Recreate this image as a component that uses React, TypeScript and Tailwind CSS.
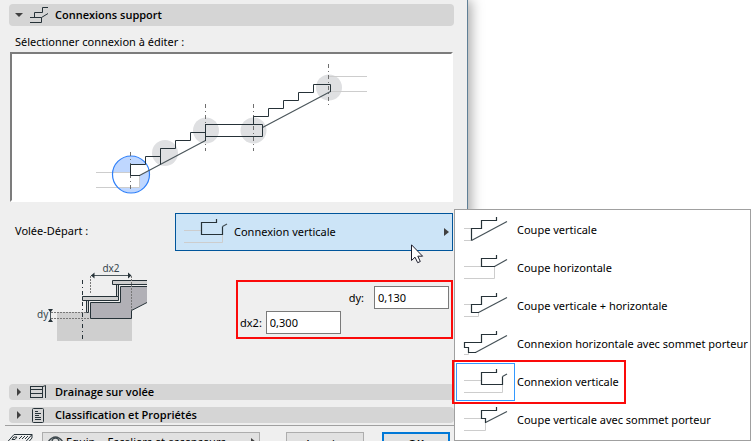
import React from 'react';

const INK = '#263238';
const PALE = '#cdcdcd';

type Connection = {
  label: string;
  stair: string;
  slope: string;
  slab: string;
};

const connections: Connection[] = [
  {
    label: 'Coupe verticale',
    stair: 'M33.5 2V5.5H18.5V13.5H8.5V25.5',
    slope: 'M8.5 25.5L44 6.5',
    slab: 'M1 13.5H8M1 25.5H8',
  },
  {
    label: 'Coupe horizontale',
    stair: 'M33.5 2V5.5H18.5V13.5H32',
    slope: 'M31.5 13.5L44 6.5',
    slab: 'M1 13.5H18M1 25.5H31.5V14',
  },
  {
    label: 'Coupe verticale + horizontale',
    stair: 'M33.5 2V5.5H18.5V13.5H8.5V21.5H16',
    slope: 'M15.5 21.5L44 6.5',
    slab: 'M1 13.5H8M1 25.5H15.5V22',
  },
  {
    label: 'Connexion horizontale avec sommet porteur',
    stair: 'M33.5 2V5.5H18.5V13.5H1.5V18.5H5.5V23.5H13',
    slope: 'M12.5 23.5L44 6.5',
    slab: 'M1 25.5H5.5V24',
  },
  {
    label: 'Connexion verticale',
    stair: 'M33.5 2V5.5H18.5V17.5H39.5V9.5',
    slope: 'M39.5 9.5L44 7',
    slab: 'M1 13.5H18M1 25.5H39.5V18',
  },
  {
    label: 'Coupe verticale avec sommet porteur',
    stair: 'M33.5 2V5.5H18.5V13.5H22.5V18',
    slope: 'M22.5 17.5L44 6.5',
    slab: 'M1 13.5H18M1 25.5H22.5V18',
  },
];

const selected = connections[4];

function ConnectionIcon({ item }: { item: Connection }) {
  return (
    <svg width="45" height="30" viewBox="0 0 45 30" fill="none" className="shrink-0" aria-hidden="true">
      <path d={item.slab} stroke={PALE} />
      <path d={item.slope} stroke="#455157" strokeWidth="1.2" />
      <path d={item.stair} stroke={INK} strokeWidth="1.2" />
    </svg>
  );
}

function StairPreview() {
  return (
    <svg width="440" height="146" viewBox="12 54 440 146" fill="none" className="shrink-0" role="img" aria-label="Escalier">
      <g fill="#dfe0e2">
        <circle cx="165" cy="153" r="13" />
        <circle cx="206" cy="130.5" r="13" />
        <circle cx="253.5" cy="130.5" r="13" />
        <circle cx="329" cy="87.5" r="13" />
      </g>
      {/* highlighted start connection */}
      <circle cx="131" cy="174.5" r="18.5" fill="#bfd7ff" />
      <path
        d="M112.7 172.5H130.5V164.5H146.5A18.5 18.5 0 0 1 149 171L139.5 175.5V187.5H118A18.5 18.5 0 0 1 112.7 172.5Z"
        fill="#fff"
      />
      <path d="M96 172.5H130M96 187.5H139.5V176" stroke={PALE} />
      <path d="M329 76.5H367M331 91.5H367" stroke={PALE} />
      <circle cx="131" cy="174.5" r="18.5" stroke="#2d7ff9" strokeWidth="1.2" />
      <g stroke="#6f6f6f" strokeDasharray="4 3 1 3">
        <path d="M130.5 152V189" />
        <path d="M205.5 104V151" />
        <path d="M253.5 104V151" />
        <path d="M328.5 64V105" />
      </g>
      <path d="M139.5 175.5L205.5 140.5M262.5 127.5L330.5 91.5" stroke="#4b565b" strokeWidth="1.2" />
      <g stroke={INK}>
        <path d="M140 175.5H130.5V164.5H145.5V156.5H160.5V148.5H175.5V140.5H190.5V132.5H205.5" />
        <path d="M160.5 148.5V164.5M205.5 124V141" />
        <path d="M205.5 124.5H262.5V136.5H205.5" />
        <path d="M253.5 124.5V116.5H268.5V108.5H283.5V100.5H298.5V92.5H313.5V84.5H330.5V92" />
      </g>
    </svg>
  );
}

function DimensionDrawing() {
  return (
    <svg
      width="115"
      height="86"
      viewBox="36 260 115 86"
      fill="none"
      className="ml-[27px] shrink-0"
      role="img"
      aria-label="Cotes dx2 et dy"
    >
      <path d="M57 312H132V341H57Z" fill="#cfcfcf" />
      <path d="M90.5 302.5H120.5V286.5H147V302.5L131.5 310.5V318.5H90.5Z" fill="#b1b0b6" />
      <path d="M147 286.5H120.5V302.5H90.5V318.5H131.5V310.5L147 302.5" stroke={INK} />
      <g fill="#cfcfcf" stroke={INK}>
        <path d="M86.5 300.5H88.5V312.5H86.5Z" />
        <path d="M116.5 284.5H118.5V296.5H116.5Z" />
        <path d="M82.5 296.5H118.5V300.5H82.5Z" />
        <path d="M147 280.5H112.5V284.5H147" />
      </g>
      <path d="M82.5 280V341" stroke={INK} strokeDasharray="4 3 1 3" />
      <g stroke="#777" strokeDasharray="2 1">
        <path d="M51 312.5H87M51 318.5H90" />
        <path d="M90.5 276V293M131.5 276V310" />
      </g>
      <path d="M91 275.5H131M50.5 312V319" stroke="#4b565b" />
      <g fill={INK}>
        <path d="M91 275.5L94.5 272.5V278.5ZM131.5 275.5L128 272.5V278.5Z" />
        <path d="M48 309H53L50.5 312.5ZM48 322H53L50.5 318.5Z" />
      </g>
      <g fill="#37464d" stroke="none" fontSize="10">
        <text x="111" y="272" textAnchor="middle">dx2</text>
        <text x="37" y="318">dy</text>
      </g>
    </svg>
  );
}

function SectionHeader({ title, open, icon }: { title: string; open?: boolean; icon: React.ReactNode }) {
  return (
    <button
      type="button"
      aria-expanded={!!open}
      className={`flex w-full items-center rounded-sm bg-[#d5d5d5] pl-[6px] text-left font-['Open_Sans','Noto_Sans',sans-serif] font-semibold ${open ? 'h-[22px]' : 'h-4'}`}
    >
      <svg width="8" height="8" viewBox="0 0 8 8" fill="#404040" aria-hidden="true">
        {open ? <path d="M0 2H8L4 6Z" /> : <path d="M2 0L6 4L2 8Z" />}
      </svg>
      <span className="ml-[7px] w-[25px]">{icon}</span>
      {title}
    </button>
  );
}

function Field({ id, label, value, gap }: { id: string; label: string; value: string; gap: string }) {
  return (
    <div className={`flex items-center ${gap}`}>
      <label htmlFor={id}>{label}</label>
      <input id={id} defaultValue={value} className="h-[23px] w-[75px] border border-[#7a7a7a] bg-white px-[3px]" />
    </div>
  );
}

function ConnectionMenu() {
  return (
    <ul
      role="menu"
      className="absolute -top-1 left-full z-10 ml-px w-[297px] border border-[#a0a0a0] bg-white p-px"
    >
      {connections.map((item) => (
        <li key={item.label} role="none" className="relative">
          <button type="button" role="menuitem" className="flex h-[38px] w-full items-center text-left whitespace-nowrap">
            <span
              className={`mr-[2px] flex h-[38px] w-[59px] shrink-0 items-center border pl-[6px] ${
                item === selected ? 'border-[#3399ff]' : 'border-transparent'
              }`}
            >
              <ConnectionIcon item={item} />
            </span>
            {item.label}
          </button>
          {item === selected && (
            <span className="pointer-events-none absolute -top-[3px] -left-1 h-11 w-[174px] border-2 border-[#fb0a0a]" />
          )}
        </li>
      ))}
    </ul>
  );
}

export default function App() {
  return (
    <main className="grid h-screen grid-cols-[minmax(0,1fr)_283px] overflow-hidden bg-white font-['Noto_Sans','Open_Sans',sans-serif] text-[11px] leading-4 text-black">
      <section className="relative h-max min-h-screen border-r border-[#5f7f96] bg-[#efefef] pt-1 pr-[13px] pl-[9px] shadow-[3px_0_12px_rgba(0,0,0,0.35)]">
        <SectionHeader
          title="Connexions support"
          open
          icon={
            <svg width="19" height="17" viewBox="30 7 19 17" fill="none" stroke={INK}>
              <path d="M48 7.5H42.5V12.5H34.5V17.5M30 17.5H41.5V22.5H30M41.5 17.5L48 13.5" />
            </svg>
          }
        />
        <p className="mt-2 mb-[2px] pl-[6px]">Sélectionner connexion à éditer :</p>

        <div className="mr-px ml-px flex h-[150px] border-2 border-t-[#7c7c7c] border-r-white border-b-white border-l-[#7c7c7c] bg-white">
          <StairPreview />
        </div>

        {/* Connection type */}
        <div className="mt-[11px] mr-px flex">
          <span className="w-[166px] shrink-0 pt-[10px] pl-[6px]">Volée-Départ :</span>
          <div className="relative flex-1">
            <button
              type="button"
              aria-haspopup="menu"
              aria-expanded="true"
              className="flex h-[38px] w-full items-center border border-[#00559b] bg-[#cce4f7] pr-[3px] pl-[7px] text-left"
            >
              <ConnectionIcon item={selected} />
              <span className="ml-[6px] flex-1">{selected.label}</span>
              <svg width="5" height="8" viewBox="0 0 5 8" fill="#404040" aria-hidden="true">
                <path d="M0 0L5 4L0 8Z" />
              </svg>
            </button>
            <svg
              width="13"
              height="20"
              viewBox="0 0 13 20"
              className="pointer-events-none absolute top-[31px] right-[29px]"
              aria-hidden="true"
            >
              <path
                d="M.5 .8V16.5L4 13.2L6.7 18.7L9.3 17.5L6.8 12.2H11.6Z"
                fill="#fff"
                stroke="#1c1c2c"
              />
            </svg>
            <ConnectionMenu />
          </div>
        </div>

        <div className="mt-[9px] mr-px flex items-start justify-between">
          <DimensionDrawing />
          <div className="mt-5 flex h-[59px] w-[217px] flex-col gap-[2px] border-2 border-[#fb0a0a] px-[2px] pt-1">
            <div className="flex justify-end">
              <Field id="dy" label="dy:" value="0,130" gap="gap-[10px]" />
            </div>
            <Field id="dx2" label="dx2:" value="0,300" gap="gap-1" />
          </div>
        </div>

        <div className="mt-[38px] flex flex-col gap-[7px]">
          <SectionHeader
            title="Drainage sur volée"
            icon={
              <svg width="17" height="14" viewBox="0 0 17 14" fill="none" stroke={INK}>
                <path d="M0 1.5H13M0 4.5H13M0 8.5H13M0 12.5H13M.5 1V13M12.5 1V13M13 1.5L15.5 .5V13" />
              </svg>
            }
          />
          <SectionHeader
            title="Classification et Propriétés"
            icon={
              <svg width="17" height="15" viewBox="0 0 17 15" fill="none" stroke={INK}>
                <rect x="2.5" y=".5" width="11" height="14" rx="1" />
                <path d="M5 3.5H8M5 5.5H11M5 7.5H9M5 9.5H11M5 11.5H11" />
              </svg>
            }
          />
        </div>

        {/* Footer */}
        <footer className="mt-[2px] -ml-1 flex items-start border-t border-[#a0a0a0] pt-[6px]">
          <svg width="26" height="22" viewBox="0 0 26 22" fill="none" stroke={INK} className="mt-[2px] ml-[2px]" aria-hidden="true">
            <path d="M0 8.5L7 .5H25L18 8.5ZM5 5.5L7 3H10L8 5.5ZM12 5L15 2M15 5L18 2M18 5L21 2M18 8.5V12L25 4V.5" />
          </svg>
          <button
            type="button"
            className="ml-[9px] flex h-[19px] w-[218px] items-center border border-[#adadad] bg-[#e1e1e1] pr-[3px] pl-1 text-left whitespace-nowrap"
          >
            <svg width="17" height="14" viewBox="0 0 17 14" fill="none" stroke="#404b50" strokeWidth="1.3" aria-hidden="true">
              <path d="M1 7Q8.5 -3 16 7Q8.5 15 1 7Z" />
              <circle cx="8.5" cy="6.5" r="3.5" />
            </svg>
            <span className="ml-[2px] flex-1">Equip. - Escaliers et ascenseurs</span>
            <svg width="5" height="8" viewBox="0 0 5 8" fill="#404040" aria-hidden="true">
              <path d="M0 0L5 4L0 8Z" />
            </svg>
          </button>
          <button type="button" className="ml-auto h-[23px] w-[78px] border border-[#adadad] bg-[#e1e1e1]">
            Annuler
          </button>
          <button type="button" className="mr-1 ml-[18px] h-[23px] w-[68px] border-2 border-[#0078d7] bg-[#e1e1e1] font-semibold">
            OK
          </button>
        </footer>
      </section>
    </main>
  );
}
